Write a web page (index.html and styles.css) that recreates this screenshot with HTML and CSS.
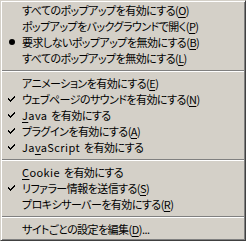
FILE: index.html
```html
<!DOCTYPE html>
<html lang="ja">
<head>
<meta charset="utf-8">
<link rel="stylesheet" href="styles.css">
</head>
<body>
<div class="menu">
  <div class="item"><span class="mark"></span><span class="label">すべてのポップアップを有効にする(<u>O</u>)</span></div>
  <div class="item"><span class="mark"></span><span class="label">ポップアップをバックグラウンドで開く(<u>P</u>)</span></div>
  <div class="item"><span class="mark"><span class="bullet"></span></span><span class="label">要求しないポップアップを無効にする(<u>B</u>)</span></div>
  <div class="item"><span class="mark"></span><span class="label">すべてのポップアップを無効にする(<u>L</u>)</span></div>
  <div class="sep"></div>
  <div class="item"><span class="mark"></span><span class="label">アニメーションを有効にする(<u>E</u>)</span></div>
  <div class="item"><span class="mark"><svg class="check" width="7" height="7" viewBox="0 0 7 7"><path d="M0 2h1v1h1v1h1V3h1V2h1V1h1V0h1v2H6v1H5v1H4v1H3v1H2V5H1V4H0z" fill="#000"/></svg></span><span class="label">ウェブページのサウンドを有効にする(<u>N</u>)</span></div>
  <div class="item"><span class="mark"><svg class="check" width="7" height="7" viewBox="0 0 7 7"><path d="M0 2h1v1h1v1h1V3h1V2h1V1h1V0h1v2H6v1H5v1H4v1H3v1H2V5H1V4H0z" fill="#000"/></svg></span><span class="label"><span class="lat"><u>J</u>ava </span>を有効にする</span></div>
  <div class="item"><span class="mark"><svg class="check" width="7" height="7" viewBox="0 0 7 7"><path d="M0 2h1v1h1v1h1V3h1V2h1V1h1V0h1v2H6v1H5v1H4v1H3v1H2V5H1V4H0z" fill="#000"/></svg></span><span class="label">プラグインを有効にする(<u>A</u>)</span></div>
  <div class="item"><span class="mark"><svg class="check" width="7" height="7" viewBox="0 0 7 7"><path d="M0 2h1v1h1v1h1V3h1V2h1V1h1V0h1v2H6v1H5v1H4v1H3v1H2V5H1V4H0z" fill="#000"/></svg></span><span class="label"><span class="lat">Ja<u>v</u>aScript </span>を有効にする</span></div>
  <div class="sep"></div>
  <div class="item"><span class="mark"></span><span class="label"><span class="lat"><u>C</u>ookie </span>を有効にする</span></div>
  <div class="item"><span class="mark"><svg class="check" width="7" height="7" viewBox="0 0 7 7"><path d="M0 2h1v1h1v1h1V3h1V2h1V1h1V0h1v2H6v1H5v1H4v1H3v1H2V5H1V4H0z" fill="#000"/></svg></span><span class="label">リファラー情報を送信する(<u>S</u>)</span></div>
  <div class="item"><span class="mark"></span><span class="label">プロキシサーバーを有効にする(<u>R</u>)</span></div>
  <div class="sep"></div>
  <div class="item"><span class="mark"></span><span class="label">サイトごとの設定を編集(<u>D</u>)...</span></div>
</div>
</body>
</html>
```
FILE: styles.css
```css
html, body {
  margin: 0;
  padding: 0;
  background: #d4d0c8;
}
.menu {
  box-sizing: border-box;
  width: 246px;
  height: 241px;
  padding: 1px;
  background: #d4d0c8;
  border: 1px solid;
  border-color: #d4d0c8 #404040 #404040 #d4d0c8;
  box-shadow: inset 1px 1px #ffffff, inset -1px -1px #808080;
  font-family: "Noto Sans CJK JP", sans-serif;
  font-size: 11px;
  letter-spacing: -0.55px;
  font-feature-settings: "palt";
  color: #000;
}
.item {
  display: flex;
  align-items: center;
  height: 16px;
  line-height: 16px;
  white-space: nowrap;
}
.mark {
  width: 20px;
  height: 16px;
  display: flex;
  align-items: center;
  justify-content: center;
  flex: none;
  padding-right: 1px;
  box-sizing: border-box;
}
.bullet {
  width: 6px;
  height: 6px;
  border-radius: 50%;
  background: #000;
}
.check {
  display: block;
}
.lat {
  letter-spacing: 0.4px;
  word-spacing: 1px;
}
.label u {
  text-decoration: underline;
  text-underline-offset: 2px;
}
.sep {
  height: 0;
  margin: 4px 0 3px;
  border-top: 1px solid #808080;
  border-bottom: 1px solid #ffffff;
}
```
